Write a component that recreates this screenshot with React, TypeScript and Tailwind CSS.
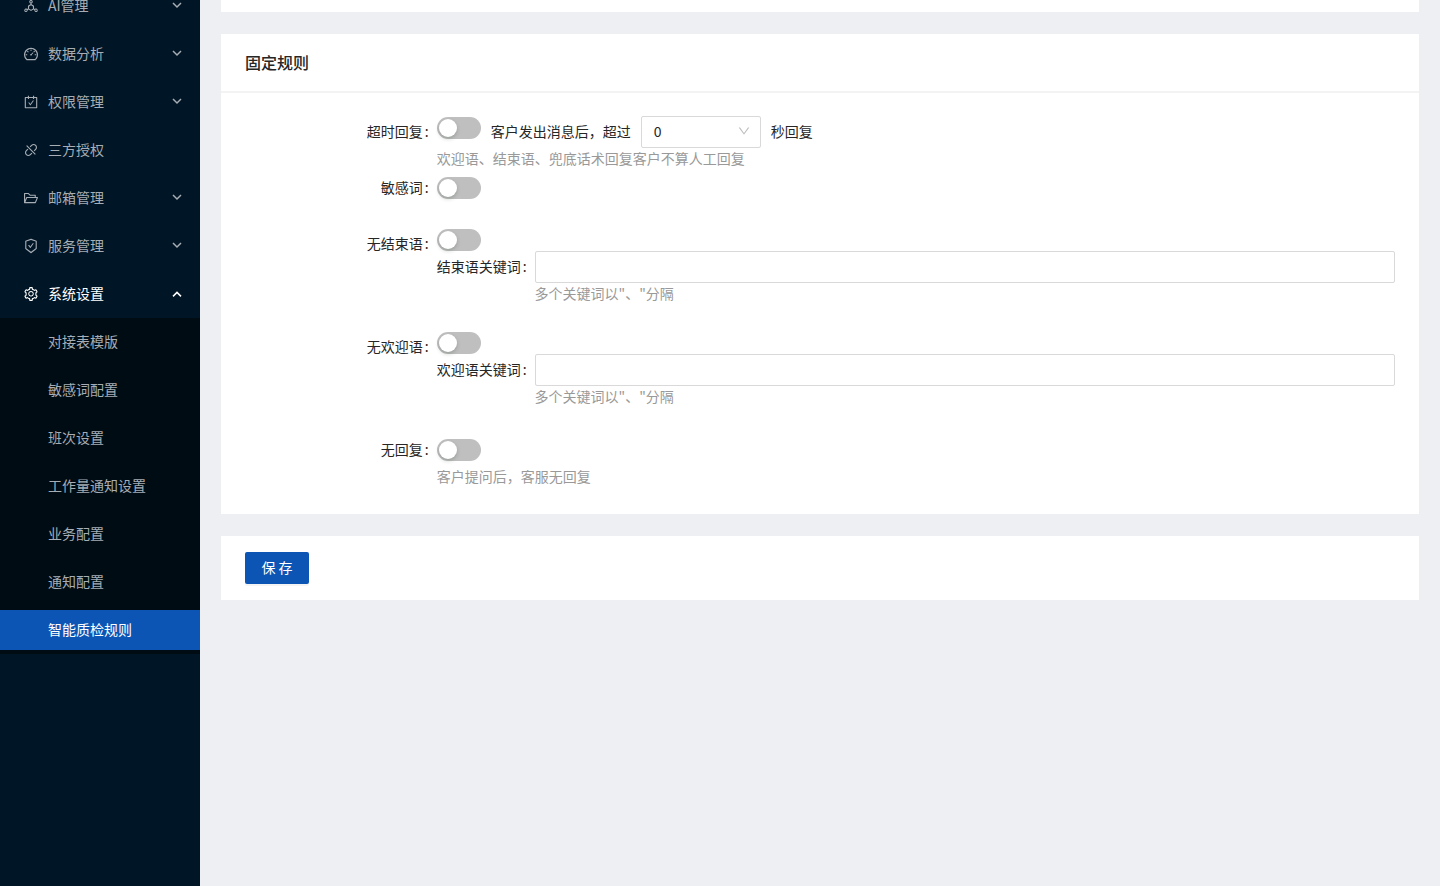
import { useState } from "react";
import type { ReactNode } from "react";
import {
  AiOutlineCarryOut,
  AiOutlineDashboard,
  AiOutlineDeploymentUnit,
  AiOutlineDisconnect,
  AiOutlineDown,
  AiOutlineFolderOpen,
  AiOutlineSafetyCertificate,
  AiOutlineSetting,
} from "react-icons/ai";

const MENU = [
  { label: "AI管理", icon: AiOutlineDeploymentUnit, expandable: true },
  { label: "数据分析", icon: AiOutlineDashboard, expandable: true },
  { label: "权限管理", icon: AiOutlineCarryOut, expandable: true },
  { label: "三方授权", icon: AiOutlineDisconnect, expandable: false },
  { label: "邮箱管理", icon: AiOutlineFolderOpen, expandable: true },
  { label: "服务管理", icon: AiOutlineSafetyCertificate, expandable: true },
  { label: "系统设置", icon: AiOutlineSetting, expandable: true, open: true },
];

const SUBMENU = [
  "对接表模版",
  "敏感词配置",
  "班次设置",
  "工作量通知设置",
  "业务配置",
  "通知配置",
  "智能质检规则",
];

function Chevron({ up }: { up?: boolean }) {
  return (
    <svg viewBox="0 0 10 8" className="w-[10px] h-2" fill="none" stroke="currentColor" strokeWidth="1.5">
      <path d={up ? "M1 6.4 5 2.4 9 6.4" : "M1 1 5 5 9 1"} />
    </svg>
  );
}

function Sidebar() {
  return (
    <aside className="w-[200px] shrink-0 bg-[#001525] text-[#a6adb4]">
      <nav className="-mt-[18px]">
        <ul>
          {MENU.map(({ label, icon: Icon, expandable, open }) => (
            <li key={label} className="py-1">
              <button
                type="button"
                className={`flex items-center w-full h-10 pl-[23px] pr-[18px] text-left ${open ? "text-white" : ""}`}
              >
                <Icon className="size-4 mr-[9px]" />
                <span className="flex-1 pb-[2px] leading-3">{label}</span>
                {expandable && <Chevron up={open} />}
              </button>
            </li>
          ))}
        </ul>
        <ul className="bg-[#000c14]">
          {SUBMENU.map((label) => (
            <li key={label} className="py-1">
              <a
                href="#"
                className={`flex items-center h-10 pl-12 pb-[2px] ${label === "智能质检规则" ? "bg-[#0c55b5] text-white" : ""}`}
              >
                {label}
              </a>
            </li>
          ))}
        </ul>
      </nav>
    </aside>
  );
}

function Switch({ id }: { id: string }) {
  const [checked, setChecked] = useState(false);

  return (
    <input
      id={id}
      type="checkbox"
      role="switch"
      checked={checked}
      onChange={() => setChecked(!checked)}
      className="block appearance-none shrink-0 w-11 h-[22px] p-[2px] rounded-full bg-[#bfbfbf] checked:bg-[#0c55b5] before:block before:size-[18px] before:rounded-full before:bg-white before:shadow-[0_2px_4px_rgba(0,35,11,0.2)] checked:before:ml-[22px]"
    />
  );
}

function Row({ id, label, className, children }: { id: string; label: string; className?: string; children: ReactNode }) {
  return (
    <div className={`flex ${className ?? ""}`}>
      <div className="w-1/6 shrink-0 text-right">
        <label htmlFor={id} className="block leading-[30px] pr-2">
          {label}<span className="ml-[2px]">:</span>
        </label>
      </div>
      <div className="flex-1 min-w-0">{children}</div>
    </div>
  );
}

function Hint({ children }: { children: ReactNode }) {
  return <p className="pb-1 leading-5 text-[#999]">{children}</p>;
}

function Keywords({ id, label }: { id: string; label: string }) {
  return (
    <div className="flex">
      <label htmlFor={id} className="leading-[30px] pr-2">
        {label}<span className="ml-[2px]">:</span>
      </label>
      <div className="flex-1">
        <input id={id} type="text" className="block w-full h-8 px-3 border border-[#d9d9d9] rounded-[2px]" />
        <Hint>多个关键词以"、"分隔</Hint>
      </div>
    </div>
  );
}

export default function App() {
  return (
    <div className="flex min-h-screen bg-[#eeeff3] text-sm text-[#262626] font-['Noto_Sans_CJK_SC',sans-serif]">
      <Sidebar />
      <main className="flex-1 px-[21px]">
        <div className="h-3 bg-white" />

        <section className="mt-[22px] bg-white">
          <h2 className="px-6 py-4 leading-[25px] text-base font-medium border-b-2 border-[#f3f3f4]">固定规则</h2>
          <form className="px-6 pt-[23px] pb-6">
            <Row id="timeout" label="超时回复">
              <div className="flex">
                <div className="pt-px">
                  <Switch id="timeout" />
                </div>
                <label htmlFor="seconds" className="leading-[30px] mx-[10px]">客户发出消息后，超过</label>
                <div className="relative w-[120px]">
                  <select id="seconds" className="block appearance-none w-full h-8 px-3 pb-[2px] bg-white border border-[#d9d9d9] rounded-[2px]">
                    <option>0</option>
                  </select>
                  <AiOutlineDown className="absolute right-[10px] top-2 size-[14px] text-[#bfbfbf] pointer-events-none" />
                </div>
                <span className="leading-[30px] ml-[10px]">秒回复</span>
              </div>
              <Hint>欢迎语、结束语、兜底话术回复客户不算人工回复</Hint>
            </Row>

            <Row id="sensitive" label="敏感词" className="mb-6">
              <div className="flex items-center h-8">
                <Switch id="sensitive" />
              </div>
            </Row>

            <Row id="no-closing" label="无结束语" className="mb-6">
              <div className="pt-px">
                <Switch id="no-closing" />
              </div>
              <Keywords id="closing-words" label="结束语关键词" />
            </Row>

            <Row id="no-welcome" label="无欢迎语" className="mb-6">
              <div className="pt-px">
                <Switch id="no-welcome" />
              </div>
              <Keywords id="welcome-words" label="欢迎语关键词" />
            </Row>

            <Row id="no-reply" label="无回复">
              <div className="flex items-center h-8">
                <Switch id="no-reply" />
              </div>
              <Hint>客户提问后，客服无回复</Hint>
            </Row>
          </form>
        </section>

        <section className="mt-[22px] px-6 py-4 bg-white">
          <button type="button" className="block h-8 w-16 pb-[2px] rounded-[2px] bg-[#0c55b5] text-white shadow-[0_2px_0_rgba(0,0,0,0.045)]">
            保 存
          </button>
        </section>
      </main>
    </div>
  );
}
